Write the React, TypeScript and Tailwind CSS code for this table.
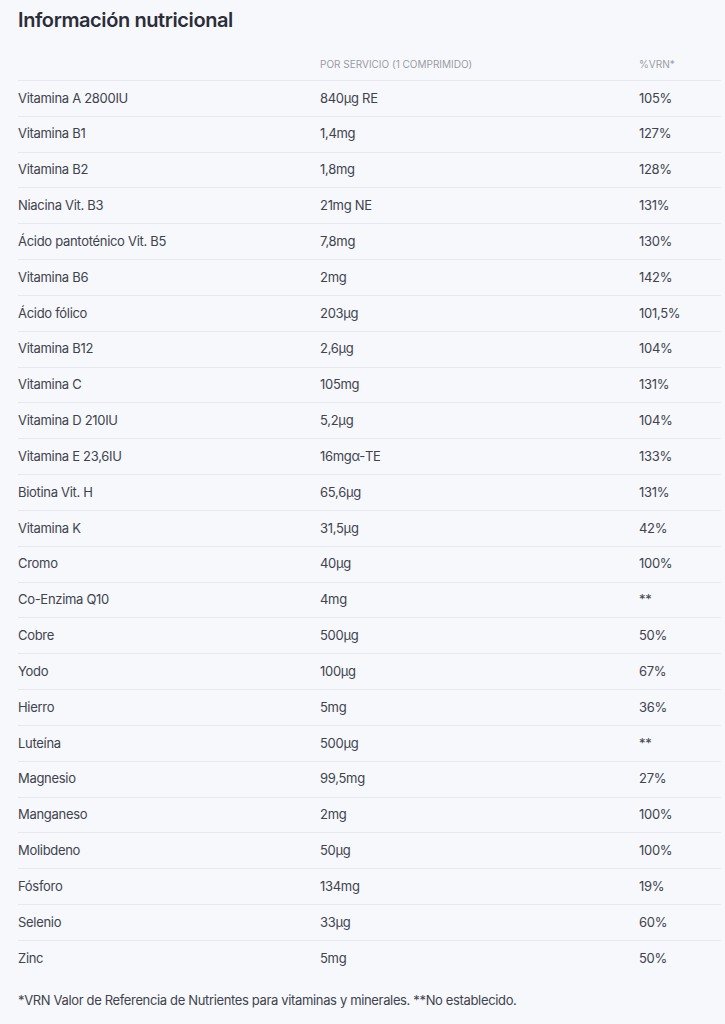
const rows: [string, string, string][] = [
  ["Vitamina A 2800IU", "840µg RE", "105%"],
  ["Vitamina B1", "1,4mg", "127%"],
  ["Vitamina B2", "1,8mg", "128%"],
  ["Niacina Vit. B3", "21mg NE", "131%"],
  ["Ácido pantoténico Vit. B5", "7,8mg", "130%"],
  ["Vitamina B6", "2mg", "142%"],
  ["Ácido fólico", "203µg", "101,5%"],
  ["Vitamina B12", "2,6µg", "104%"],
  ["Vitamina C", "105mg", "131%"],
  ["Vitamina D 210IU", "5,2µg", "104%"],
  ["Vitamina E 23,6IU", "16mgα-TE", "133%"],
  ["Biotina Vit. H", "65,6µg", "131%"],
  ["Vitamina K", "31,5µg", "42%"],
  ["Cromo", "40µg", "100%"],
  ["Co-Enzima Q10", "4mg", "**"],
  ["Cobre", "500µg", "50%"],
  ["Yodo", "100µg", "67%"],
  ["Hierro", "5mg", "36%"],
  ["Luteína", "500µg", "**"],
  ["Magnesio", "99,5mg", "27%"],
  ["Manganeso", "2mg", "100%"],
  ["Molibdeno", "50µg", "100%"],
  ["Fósforo", "134mg", "19%"],
  ["Selenio", "33µg", "60%"],
  ["Zinc", "5mg", "50%"],
];

export default function App() {
  return (
    <div className="min-h-[1024px] w-[725px] bg-[#f7f8fb] pl-[18px] pr-[4px] font-['Inter',sans-serif] text-[#40434e]">
      <h1 className="pt-[6px] text-[20px] leading-[28px] font-semibold text-[#2b2e3a] tracking-[-0.4px]">
        Información nutricional
      </h1>
      <div className="mt-[23px] grid grid-cols-[302px_319px_1fr] h-[23px] text-[10px] leading-[14px] uppercase text-[#9a9ca5]">
        <div />
        <div>Por servicio (1 comprimido)</div>
        <div className="normal-case">%VRN*</div>
      </div>
      <div>
        {rows.map(([name, amount, pct], i) => (
          <div
            key={i}
            className="grid grid-cols-[302px_319px_1fr] items-center h-[35.83px] border-t border-[#e7e8ed] text-[13px] tracking-[-0.3px]"
          >
            <div>{name}</div>
            <div>{amount}</div>
            <div>{pct}</div>
          </div>
        ))}
      </div>
      <p className="mt-[15px] text-[13px] tracking-[-0.35px] text-[#40434e]">
        *VRN Valor de Referencia de Nutrientes para vitaminas y minerales. **No establecido.
      </p>
    </div>
  );
}
